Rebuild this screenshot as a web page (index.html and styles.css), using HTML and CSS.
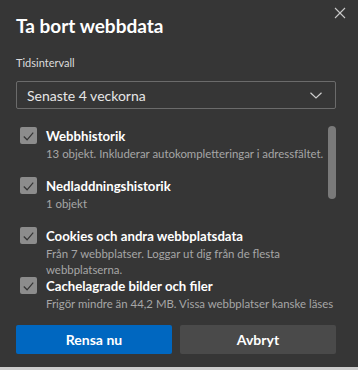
FILE: index.html
```html
<!DOCTYPE html>
<html>

<head>
  <title>Ta bort webbdata</title>
  <meta content='width=device-width, initial-scale=1' name='viewport' />
  <link rel="stylesheet" href="styles.css">
</head>

<body>
  <div class="dialog">
    <!-- Close button -->
    <button class="close-btn" title="Stäng">
      <svg viewBox="0 0 12 12" width="12" height="12" fill="none" stroke="currentColor" stroke-width="1.1">
        <line x1="1" y1="1" x2="11" y2="11"></line>
        <line x1="11" y1="1" x2="1" y2="11"></line>
      </svg>
    </button>

    <h1 class="dialog-title">Ta bort webbdata</h1>

    <label class="field-label">Tidsintervall</label>
    <div class="select">
      <span>Senaste 4 veckorna</span>
      <svg class="chevron" viewBox="0 0 12 7" width="12" height="7" fill="none" stroke="currentColor" stroke-width="1.2">
        <polyline points="0.5,0.8 6,6 11.5,0.8"></polyline>
      </svg>
    </div>

    <div class="data-list">
      <div class="item">
        <span class="checkbox">
          <svg viewBox="0 0 18 18" width="18" height="18" fill="none" stroke="currentColor" stroke-width="1.3">
            <polyline points="4,9.5 7.5,13 14,5.5"></polyline>
          </svg>
        </span>
        <div class="item-text">
          <div class="item-title">Webbhistorik</div>
          <div class="item-desc">13 objekt. Inkluderar autokompletteringar i adressfältet.</div>
        </div>
      </div>
      <div class="item">
        <span class="checkbox">
          <svg viewBox="0 0 18 18" width="18" height="18" fill="none" stroke="currentColor" stroke-width="1.3">
            <polyline points="4,9.5 7.5,13 14,5.5"></polyline>
          </svg>
        </span>
        <div class="item-text">
          <div class="item-title">Nedladdningshistorik</div>
          <div class="item-desc">1 objekt</div>
        </div>
      </div>
      <div class="item">
        <span class="checkbox">
          <svg viewBox="0 0 18 18" width="18" height="18" fill="none" stroke="currentColor" stroke-width="1.3">
            <polyline points="4,9.5 7.5,13 14,5.5"></polyline>
          </svg>
        </span>
        <div class="item-text">
          <div class="item-title">Cookies och andra webbplatsdata</div>
          <div class="item-desc narrow">Från 7 webbplatser. Loggar ut dig från de flesta webbplatserna.</div>
        </div>
      </div>
      <div class="item">
        <span class="checkbox">
          <svg viewBox="0 0 18 18" width="18" height="18" fill="none" stroke="currentColor" stroke-width="1.3">
            <polyline points="4,9.5 7.5,13 14,5.5"></polyline>
          </svg>
        </span>
        <div class="item-text">
          <div class="item-title">Cachelagrade bilder och filer</div>
          <div class="item-desc">Frigör mindre än 44,2 MB. Vissa webbplatser kanske läses</div>
        </div>
      </div>

      <div class="scroll-thumb"></div>
    </div>

    <div class="actions">
      <button class="btn btn-primary">Rensa nu</button>
      <button class="btn btn-secondary">Avbryt</button>
    </div>
  </div>
</body>

</html>
```

FILE: styles.css
```css
:root {
  --page-bg: #cdcdcd;
  --dialog-bg: #363636;
  --text-color: #ffffff;
  --label-color: #dcdcdc;
  --muted-color: #a6a6a6;
  --border-color: #6b6b6b;
  --checkbox-bg: #8c8c8c;
  --checkbox-mark: #353535;
  --thumb-color: #7a7a7a;
  --btn-primary-bg: #0067c0;
  --btn-secondary-bg: #4a4a4a;
}

* {
  box-sizing: border-box;
}

body {
  margin: 0;
  padding: 0;
  background-color: var(--page-bg);
  font-family: Lato, "Open Sans", sans-serif;
  color: var(--text-color);
}

.dialog {
  position: relative;
  width: 358px;
  height: 367px;
  padding: 12px 22px 0 16px;
  background-color: var(--dialog-bg);
  display: flex;
  flex-direction: column;
}

.close-btn {
  position: absolute;
  top: 4px;
  right: 8px;
  width: 20px;
  height: 18px;
  padding: 0;
  border: none;
  background: none;
  color: #c8c8c8;
  display: flex;
  align-items: center;
  justify-content: center;
}

.dialog-title {
  margin: 0;
  font-size: 19px;
  line-height: 28px;
  font-weight: 700;
}

.field-label {
  margin-top: 15px;
  font-size: 11px;
  line-height: 16px;
  color: var(--label-color);
}

.select {
  margin-top: 10px;
  height: 28px;
  border: 1px solid var(--border-color);
  border-radius: 2px;
  padding: 0 13px 0 10px;
  display: flex;
  align-items: center;
  justify-content: space-between;
  font-size: 14px;
  color: #e6e6e6;
}

.chevron {
  color: #cfcfcf;
  margin-top: 1px;
}

.data-list {
  position: relative;
  height: 204px;
  padding: 17px 0 0 4px;
  overflow: hidden;
}

.item {
  display: flex;
  gap: 9px;
  height: 50px;
}

.checkbox {
  flex: none;
  width: 17px;
  height: 17px;
  margin-top: 1px;
  border-radius: 2px;
  background-color: var(--checkbox-bg);
  color: var(--checkbox-mark);
  display: flex;
  align-items: center;
  justify-content: center;
}

.item-text {
  min-width: 0;
}

.item-title {
  font-size: 13.2px;
  line-height: 20px;
  font-weight: 700;
}

.item-desc {
  font-size: 11.4px;
  line-height: 16px;
  color: var(--muted-color);
  white-space: nowrap;
}

.item-desc.narrow {
  white-space: normal;
  max-width: 250px;
}

.scroll-thumb {
  position: absolute;
  top: 17px;
  right: 0;
  width: 8px;
  height: 73px;
  border-radius: 4px;
  background-color: var(--thumb-color);
}

.actions {
  margin-top: 12px;
  display: flex;
  gap: 8px;
}

.btn {
  flex: 1;
  height: 29px;
  border: none;
  border-radius: 2px;
  font-family: inherit;
  font-size: 14px;
  font-weight: 700;
  color: #ffffff;
}

.btn-primary {
  background-color: var(--btn-primary-bg);
}

.btn-secondary {
  background-color: var(--btn-secondary-bg);
}
```
